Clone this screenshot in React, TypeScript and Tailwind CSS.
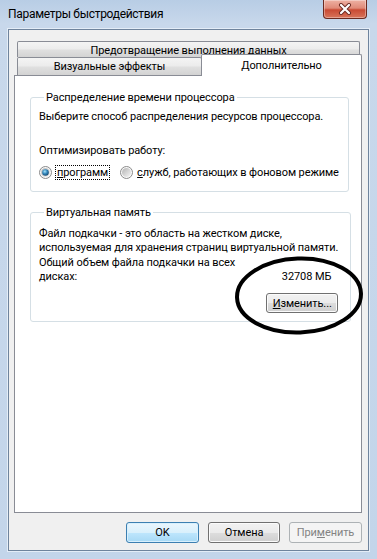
import React from "react";

function Radio({ checked, id }: { checked: boolean; id: string }) {
  return (
    <svg width="13" height="13" viewBox="0 0 13 13" className="block shrink-0">
      <defs>
        <linearGradient id={`ring-${id}`} x1="0" y1="0" x2="1" y2="1">
          <stop offset="0" stopColor="#b4b4b4" />
          <stop offset="1" stopColor="#f6f6f6" />
        </linearGradient>
        <radialGradient id={`dot-${id}`} cx="0.4" cy="0.35" r="0.75">
          <stop offset="0" stopColor="#a8e4fa" />
          <stop offset="0.45" stopColor="#3588bd" />
          <stop offset="1" stopColor="#0d3a5e" />
        </radialGradient>
      </defs>
      <circle cx="6.5" cy="6.5" r="6" fill="#f9f9f9" stroke="#8b8b8b" strokeWidth="1" />
      <circle cx="6.5" cy="6.5" r="4.5" fill={`url(#ring-${id})`} />
      {checked && <circle cx="6.5" cy="6.5" r="3.3" fill={`url(#dot-${id})`} />}
    </svg>
  );
}

export default function App() {
  return (
    <div className="relative w-[377px] h-[559px] overflow-hidden whitespace-nowrap bg-[linear-gradient(#b8cde5,#c8d8eb_24px,#c3d5ea)] font-['Roboto',sans-serif] text-[11px] leading-[15px] tracking-[-0.1px] text-black">
      {/* Title bar */}
      <div className="flex h-[29px] items-start">
        <div className="flex-1 pl-[8px] pt-[7px] text-[12px] tracking-[-0.3px] text-[#000]">Параметры быстродействия</div>
        <div className="mr-[10px] flex h-[19px] w-[44px] items-center justify-center rounded-b-[4px] border border-t-0 border-[#6b2a20] bg-[linear-gradient(#eeb1a3,#e08a78_45%,#c94a33_55%,#d8745a)] shadow-[inset_0_0_0_1px_rgba(255,255,255,0.35)]">
          <svg width="14" height="12" viewBox="0 0 14 12">
            <path d="M3 2 L11 10 M11 2 L3 10" stroke="#6a2a22" strokeWidth="4" strokeLinecap="round" />
            <path d="M3 2 L11 10 M11 2 L3 10" stroke="#ffffff" strokeWidth="2.2" strokeLinecap="round" />
          </svg>
        </div>
      </div>

      {/* Client area */}
      <div className="mx-[8px] flex h-[522px] flex-col border border-[#6f849d] bg-[#f0f0f0] pl-[5px] pr-[6px] pt-[11px] shadow-[0_0_0_1px_#e4edf7]">
        {/* Tabs row 1 */}
        <div className="ml-[3px] flex h-[16px] w-[343px] items-center justify-center rounded-t-[2px] border border-b-0 border-[#898c95] bg-[linear-gradient(#f4f4f4,#ececec_45%,#dfdfdf_55%,#d3d3d3)]">
          <span className="mt-[1px]">Предотвращение выполнения данных</span>
        </div>
        {/* Tabs row 2 */}
        <div className="flex items-start">
          <div className="ml-[3px] flex h-[18px] w-[185px] items-center justify-center rounded-t-[2px] border border-b-0 border-[#898c95] bg-[linear-gradient(#f4f4f4,#ececec_45%,#dfdfdf_55%,#d3d3d3)]">
            Визуальные эффекты
          </div>
          <div className="relative z-10 -mb-[1px] -ml-[1px] -mt-[3px] flex h-[22px] w-[161px] items-start justify-center rounded-t-[2px] border border-b-0 border-[#898c95] bg-white pt-[3px]">
            Дополнительно
          </div>
        </div>

        {/* Panel */}
        <div className="h-[438px] w-[348px] border border-[#898c95] bg-white px-[15px]">
          <fieldset className="mt-[14px] w-[319px] rounded-[3px] border border-[#d5dfe5] pb-[11px] pl-[8px]">
            <legend className="ml-[5px] px-[2px]">Распределение времени процессора</legend>
            <div className="mt-[4px]">Выберите способ распределения ресурсов процессора.</div>
            <div className="mt-[19px]">Оптимизировать работу:</div>
            <div className="mt-[7px] flex items-center">
              <Radio checked id="a" />
              <span className="ml-[3px] border border-dotted border-black px-[1px] leading-[13px]">
                <span className="underline">п</span>рограмм
              </span>
              <span className="ml-[10px]">
                <Radio checked={false} id="b" />
              </span>
              <span className="ml-[4px]">
                <span className="underline">с</span>лужб, работающих в фоновом режиме
              </span>
            </div>
          </fieldset>

          <fieldset className="mt-[13px] w-[319px] rounded-[3px] border border-[#d5dfe5] pb-[8px] pl-[8px] pr-[12px]">
            <legend className="ml-[5px] px-[2px]">Виртуальная память</legend>
            <div className="mt-[7px] leading-[14px]">
              Файл подкачки - это область на жестком диске,
              <br />
              используемая для хранения страниц виртуальной памяти.
            </div>
            <div className="mt-[1px] flex items-end justify-between pr-[7px] leading-[14px]">
              <div>
                Общий объем файла подкачки на всех
                <br />
                дисках:
              </div>
              <div>32708 МБ</div>
            </div>
            <div className="mt-[9px] flex justify-end">
              <button className="h-[20px] w-[72px] rounded-[3px] border border-[#707070] bg-[linear-gradient(#f2f2f2,#ebebeb_50%,#dddddd_51%,#cfcfcf)] leading-[15px] shadow-[inset_0_0_0_1px_#fbfbfb]">
                <span className="underline">И</span>зменить...
              </button>
            </div>
          </fieldset>
        </div>

        {/* Bottom buttons */}
        <div className="mt-[9px] flex justify-end gap-[9px]">
          <button className="h-[21px] w-[73px] rounded-[3px] border border-[#3c7fb1] bg-[linear-gradient(#eaf6fd,#d9f0fc_50%,#bee6fd_51%,#a7d9f5)] leading-[15px] shadow-[inset_0_0_0_1px_#d8f0fd]">
            OK
          </button>
          <button className="h-[21px] w-[72px] rounded-[3px] border border-[#707070] bg-[linear-gradient(#f2f2f2,#ebebeb_50%,#dddddd_51%,#cfcfcf)] leading-[15px] shadow-[inset_0_0_0_1px_#fbfbfb]">
            Отмена
          </button>
          <button className="h-[21px] w-[73px] rounded-[3px] border border-[#adb2b5] bg-[#f4f4f4] leading-[15px] text-[#838383]">
            При<span className="underline">м</span>енить
          </button>
        </div>
      </div>

      {/* Hand-drawn annotation ellipse */}
      <svg className="pointer-events-none absolute left-[234px] top-[255px]" width="132" height="82" viewBox="0 0 132 82">
        <ellipse cx="65" cy="40.5" rx="62" ry="37" fill="none" stroke="#000" strokeWidth="4" transform="rotate(-2 65 40.5)" />
      </svg>
    </div>
  );
}
